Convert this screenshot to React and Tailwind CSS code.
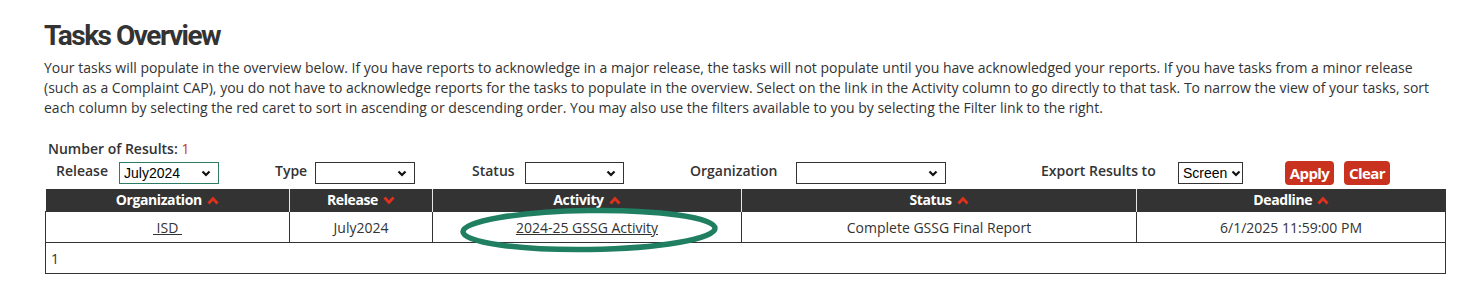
import { Fragment } from "react";

const columns = [
  { key: "organization", title: "Organization", sort: "up", width: "w-[244px]" },
  { key: "release", title: "Release", sort: "down", width: "w-[143px]" },
  { key: "activity", title: "Activity", sort: "up", width: "w-[309px]" },
  { key: "status", title: "Status", sort: "up", width: "w-[395px]" },
  { key: "deadline", title: "Deadline", sort: "up", width: "w-[309px]" },
];

/**
 * Red sort caret used in the table header.
 */
function Caret({ dir }) {
  return (
    <svg
      width="12"
      height="9"
      viewBox="0 0 12 9"
      className="inline-block ml-[5px] align-[0px]"
    >
      <path
        d={dir === "up" ? "M1.5 7.5 L6 2.5 L10.5 7.5" : "M1.5 1.5 L6 6.5 L10.5 1.5"}
        fill="none"
        stroke="#e0311c"
        strokeWidth="2.8"
      />
    </svg>
  );
}

/**
 * Plain dropdown with the small black chevron.
 */
function Dropdown({ width, value, options = [], focused = false, tight = false }) {
  return (
    <div className={`relative ${width} h-[22px]`}>
      <select
        defaultValue={value}
        className={`appearance-none w-full h-full pl-[4px] text-[14px] font-normal leading-[20px] text-black bg-white font-['Liberation_Sans',Arial,sans-serif] border ${
          focused ? "border-[#2c7d63]" : "border-[#333]"
        }`}
      >
        {options.map((o) => (
          <option key={o} value={o}>
            {o}
          </option>
        ))}
      </select>
      <svg
        width="10"
        height="7"
        viewBox="0 0 10 7"
        className={`absolute top-[8px] pointer-events-none ${tight ? "right-[2px]" : "right-[8px]"}`}
      >
        <path d="M1.5 1.5 L5 5 L8.5 1.5" fill="none" stroke="#111" strokeWidth="2.2" />
      </svg>
    </div>
  );
}

const App = () => {
  return (
    <Fragment>
      <div className="w-[1482px] h-[295px] bg-white text-[#333] font-['Open_Sans',sans-serif]">
        <div className="ml-[44px] w-[1402px] pt-[19px]">
          <h1 className="text-[28px] leading-[34px] font-bold tracking-[-1.5px] text-[#333] font-['Roboto',sans-serif]">
            Tasks Overview
          </h1>
          <p className="mt-[5px] text-[14px] leading-[20px]">
            Your tasks will populate in the overview below. If you have reports to
            acknowledge in a major release, the tasks will not populate until you
            have acknowledged your reports. If you have tasks from a minor release
            (such as a Complaint CAP), you do not have to acknowledge reports for
            the tasks to populate in the overview. Select on the link in the
            Activity column to go directly to that task. To narrow the view of your
            tasks, sort each column by selecting the red caret to sort in ascending
            or descending order. You may also use the filters available to you by
            selecting the Filter link to the right.
          </p>

          <div className="mt-[21px] ml-[4px] text-[14px] leading-[20px]">
            <span className="font-semibold">Number of Results: </span>
            <span className="text-[#c8321e]">1</span>
          </div>

          {/* Filters */}
          <div className="flex items-center h-[26px] mt-[1px] pl-[12px] text-[14px] leading-[20px] font-semibold">
            <span className="w-[63px] mb-[4px]">Release</span>
            <Dropdown width="w-[100px]" value="July2024" options={["July2024"]} focused />
            <span className="ml-[56px] w-[40px] mb-[4px]">Type</span>
            <Dropdown width="w-[100px]" value="" options={[""]} />
            <span className="ml-[57px] w-[53px] mb-[4px]">Status</span>
            <Dropdown width="w-[99px]" value="" options={[""]} />
            <span className="ml-[66px] w-[106px] mb-[4px]">Organization</span>
            <Dropdown width="w-[150px]" value="" options={[""]} />
            <span className="ml-[95px] w-[137px] mb-[4px]">Export Results to</span>
            <Dropdown width="w-[65px]" value="Screen" options={["Screen"]} tight />
            <button
              type="button"
              className="ml-[42px] w-[49px] h-[24px] rounded-[4px] bg-[#c9321f] text-white text-[15px] font-bold tracking-[-0.6px] leading-[24px]"
            >
              Apply
            </button>
            <button
              type="button"
              className="ml-[10px] w-[46px] h-[24px] rounded-[4px] bg-[#c9321f] text-white text-[15px] font-bold tracking-[-0.6px] leading-[24px]"
            >
              Clear
            </button>
          </div>

          {/* Tasks table */}
          <table className="mt-[3px] ml-[1px] w-[1400px] table-fixed border-collapse text-[14px]">
            <colgroup>
              {columns.map((c) => (
                <col key={c.key} className={c.width} />
              ))}
            </colgroup>
            <thead>
              <tr className="bg-[#333] text-white h-[22px]">
                {columns.map((c, i) => (
                  <th
                    key={c.key}
                    className={`p-0 leading-[22px] font-bold tracking-[-0.4px] text-center ${
                      i < columns.length - 1 ? "border-r border-[#e6e6e6]" : ""
                    }`}
                  >
                    {c.title}
                    <Caret dir={c.sort} />
                  </th>
                ))}
              </tr>
            </thead>
            <tbody>
              <tr className="h-[31px]">
                <td className="border border-[#333] text-center">
                  <a href="#" className="underline text-[#333]">
                    &nbsp;ISD&nbsp;
                  </a>
                </td>
                <td className="border border-[#333] text-center">July2024</td>
                <td className="relative border border-[#333] text-center">
                  <a href="#" className="underline text-[#333]">
                    2024-25 GSSG Activity
                  </a>
                  {/* annotation circle */}
                  <svg
                    width="262"
                    height="48"
                    viewBox="0 0 262 48"
                    className="absolute left-[25px] top-[-6px] pointer-events-none"
                  >
                    <ellipse
                      cx="131"
                      cy="24"
                      rx="126"
                      ry="19.5"
                      fill="none"
                      stroke="#1f7f60"
                      strokeWidth="5.5"
                      transform="rotate(-0.8 131 24)"
                    />
                  </svg>
                </td>
                <td className="border border-[#333] text-center">
                  Complete GSSG Final Report
                </td>
                <td className="border border-[#333] text-center">
                  6/1/2025 11:59:00 PM
                </td>
              </tr>
              <tr className="h-[31px]">
                <td colSpan={5} className="border border-[#333] pl-[5px]">
                  1
                </td>
              </tr>
            </tbody>
          </table>
        </div>
      </div>
    </Fragment>
  );
};

export default App;
